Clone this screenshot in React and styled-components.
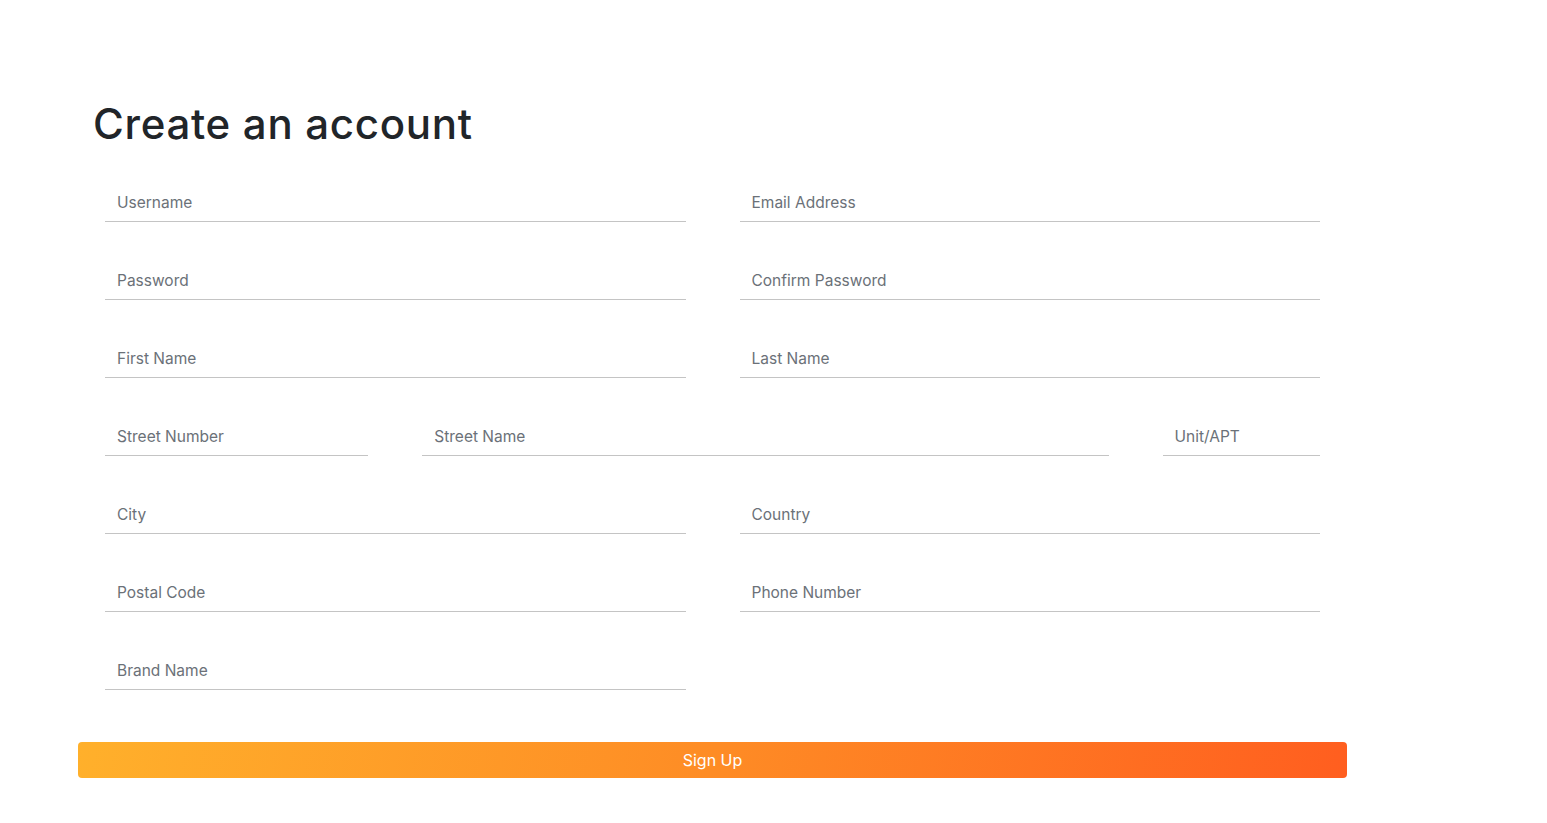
import React from 'react';
import styled, { createGlobalStyle } from 'styled-components';

const GlobalStyle = createGlobalStyle`
  html, body {
    margin: 0;
    padding: 0;
    background: #ffffff;
  }
  * {
    box-sizing: border-box;
  }
`;

const Page = styled.main`
  padding: 96px 0 0 78px;
`;

const Container = styled.div`
  width: 1269px;
`;

const Title = styled.h1`
  margin: 0 0 32px 15px;
  font-family: Inter, "Noto Sans", sans-serif;
  font-size: 42px;
  font-weight: 500;
  line-height: 56px;
  letter-spacing: 0.7px;
  color: #212529;
`;

const Form = styled.form`
  display: flex;
  flex-direction: column;
`;

const Row = styled.div`
  display: grid;
  grid-template-columns: repeat(12, 1fr);
  margin-bottom: 40px;
`;

const Col = styled.div`
  grid-column: span ${(p) => p.span};
  padding: 0 27px;
`;

const Input = styled.input`
  display: block;
  width: 100%;
  height: 38px;
  padding: 0 12px;
  border: none;
  border-bottom: 1px solid #c4c4c4;
  outline: none;
  background: transparent;
  font-family: Inter, "Noto Sans", sans-serif;
  font-size: 15.5px;
  color: #495057;

  &::placeholder {
    color: #6b7178;
  }
`;

const Button = styled.button`
  margin-top: 12px;
  width: 100%;
  height: 36px;
  border: none;
  border-radius: 4px;
  background: linear-gradient(100deg, #ffb02b 0%, #fe8c25 50%, #ff5e1f 100%);
  color: #ffffff;
  font-family: Inter, "Noto Sans", sans-serif;
  font-size: 16px;
  cursor: pointer;
`;

const rows = [
  [['Username', 6], ['Email Address', 6]],
  [['Password', 6], ['Confirm Password', 6]],
  [['First Name', 6], ['Last Name', 6]],
  [['Street Number', 3], ['Street Name', 7], ['Unit/APT', 2]],
  [['City', 6], ['Country', 6]],
  [['Postal Code', 6], ['Phone Number', 6]],
  [['Brand Name', 6]],
];

const App = () => (
  <>
    <GlobalStyle />
    <Page>
      <Container>
        <Title>Create an account</Title>
        <Form onSubmit={(e) => e.preventDefault()}>
          {rows.map((row, i) => (
            <Row key={i}>
              {row.map(([label, span]) => (
                <Col key={label} span={span}>
                  <Input
                    type={label.includes('Password') ? 'password' : 'text'}
                    placeholder={label}
                  />
                </Col>
              ))}
            </Row>
          ))}
          <Button type="submit">Sign Up</Button>
        </Form>
      </Container>
    </Page>
  </>
);

export default App;
